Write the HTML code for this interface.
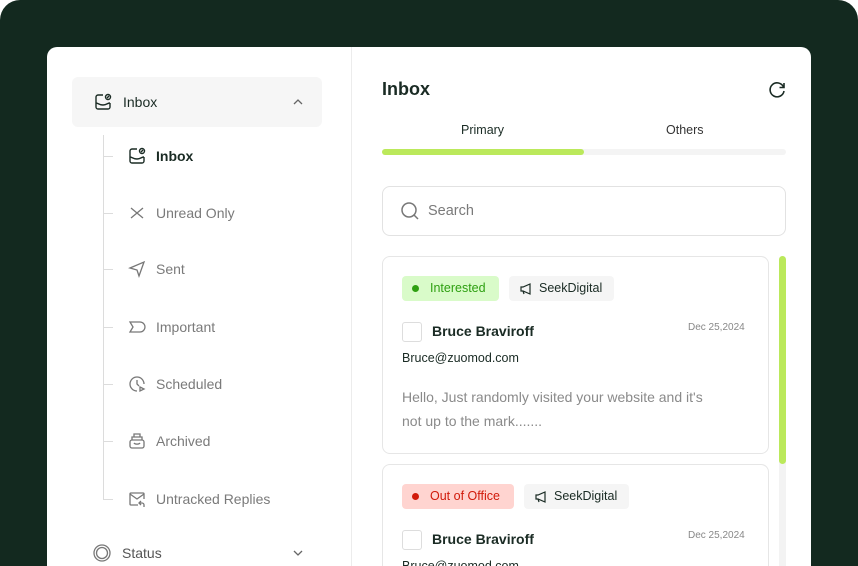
<!DOCTYPE html>
<html style="width:858px;height:566px;overflow:hidden"><head><meta charset="utf-8"><style>
*{box-sizing:border-box;margin:0;padding:0}
body{width:858px;height:566px;overflow:hidden;background:#fff;font-family:"Liberation Sans",sans-serif;position:relative}
.wrap{position:absolute;left:0;top:0;width:858px;height:566px;border-radius:20px 20px 0 0;background:#13291f}
.card{position:absolute;left:47px;top:47px;width:764px;height:519px;background:#fff;border-radius:10px 10px 0 0;overflow:hidden}
.side{position:absolute;left:0;top:0;width:305px;height:100%;border-right:1px solid #ececec}
.top{position:absolute;left:25px;top:30px;width:250px;height:50px;background:#f6f6f6;border-radius:6px}
.ic{position:absolute;width:20px;height:20px}
.t{position:absolute;font-size:14px;color:#7a7a7a;white-space:nowrap}
.vline{position:absolute;left:56px;top:88px;width:1px;height:365px;background:#dcdcdc}
.h{position:absolute;left:56px;width:10px;height:1px;background:#dcdcdc}
.ecard{position:absolute;left:335px;width:387px;border:1px solid #e6e6e6;border-radius:8px;background:#fff}
.tag{position:absolute;height:25px;border-radius:4px;font-size:12.5px;line-height:25px}
</style></head><body>
<div class="wrap"></div>
<div class="card">
 <div class="side">
  <div class="top"></div>
  <svg class="ic" style="left:46px;top:45px" viewBox="0 0 20 20" fill="none" stroke="#1a2b24" stroke-width="1.4"><path d="M10 3H5a2 2 0 0 0-2 2v10a2 2 0 0 0 2 2h10a2 2 0 0 0 2-2v-4"/><path d="M3 11c2 0 3 2 7 2s4-2 7-2"/><circle cx="15" cy="5" r="2.5"/><path d="M14 6l2-2"/></svg>
  <div class="t" style="left:76px;top:47px;color:#1a2b24">Inbox</div>
  <svg style="position:absolute;left:245px;top:51px" width="12" height="8" viewBox="0 0 12 8" fill="none" stroke="#666" stroke-width="1.3"><path d="M2 6l4-4 4 4"/></svg>
  <div class="vline"></div>
  <div class="h" style="top:109px"></div><div class="h" style="top:166px"></div><div class="h" style="top:222px"></div><div class="h" style="top:280px"></div><div class="h" style="top:337px"></div><div class="h" style="top:394px"></div><div class="h" style="top:452px"></div>
  <svg class="ic" style="left:80px;top:99px" viewBox="0 0 20 20" fill="none" stroke="#1a2b24" stroke-width="1.4"><path d="M10 3H5a2 2 0 0 0-2 2v10a2 2 0 0 0 2 2h10a2 2 0 0 0 2-2v-4"/><path d="M3 11c2 0 3 2 7 2s4-2 7-2"/><circle cx="15" cy="5" r="2.5"/><path d="M14 6l2-2"/></svg>
  <div class="t" style="left:109px;top:101px;color:#1a2b24;font-weight:bold">Inbox</div>
  <svg class="ic" style="left:80px;top:156px" viewBox="0 0 20 20" fill="none" stroke="#777" stroke-width="1.3"><path d="M4 5l12 10M16 5L4 15"/></svg>
  <div class="t" style="left:109px;top:158px">Unread Only</div>
  <svg class="ic" style="left:80px;top:212px" viewBox="0 0 20 20" fill="none" stroke="#777" stroke-width="1.3"><path d="M3 9l14-6-5 14-2-6z"/></svg>
  <div class="t" style="left:109px;top:214px">Sent</div>
  <svg class="ic" style="left:80px;top:270px" viewBox="0 0 20 20" fill="none" stroke="#777" stroke-width="1.3"><path d="M3 5h10c3 0 5 2.5 5 5s-2 5-5 5H3l3-5z"/></svg>
  <div class="t" style="left:109px;top:272px">Important</div>
  <svg class="ic" style="left:80px;top:327px" viewBox="0 0 20 20" fill="none" stroke="#777" stroke-width="1.3"><path d="M10 17a7 7 0 1 1 7-7"/><path d="M10 6v4l2 2"/><path d="M13 13l4 2-4 2z"/></svg>
  <div class="t" style="left:109px;top:329px">Scheduled</div>
  <svg class="ic" style="left:80px;top:384px" viewBox="0 0 20 20" fill="none" stroke="#777" stroke-width="1.3"><rect x="3" y="9" width="14" height="8" rx="2"/><path d="M5 9V6h10v3M7 6V3h6v3M7 12c1 1.5 5 1.5 6 0"/></svg>
  <div class="t" style="left:109px;top:386px">Archived</div>
  <svg class="ic" style="left:80px;top:442px" viewBox="0 0 20 20" fill="none" stroke="#777" stroke-width="1.3"><path d="M17 10V5a1 1 0 0 0-1-1H4a1 1 0 0 0-1 1v10a1 1 0 0 0 1 1h7"/><path d="M3 5l7 5 7-5"/><path d="M17 18v-2a2 2 0 0 0-2-2h-2M14 12l-2 2 2 2"/></svg>
  <div class="t" style="left:109px;top:444px">Untracked Replies</div>
  <svg class="ic" style="left:45px;top:496px" viewBox="0 0 20 20" fill="none" stroke="#777" stroke-width="1.3"><circle cx="10" cy="10" r="8"/><circle cx="10" cy="10" r="5.5"/></svg>
  <div class="t" style="left:75px;top:498px;color:#555">Status</div>
  <svg style="position:absolute;left:245px;top:502px" width="12" height="8" viewBox="0 0 12 8" fill="none" stroke="#666" stroke-width="1.3"><path d="M2 2l4 4 4-4"/></svg>
 </div>
 <div class="t" style="left:335px;top:32px;font-size:18px;font-weight:bold;color:#1a2b24">Inbox</div>
 <svg style="position:absolute;left:719px;top:32px" width="22" height="22" viewBox="0 0 22 22" fill="none" stroke="#1a2b24" stroke-width="1.6"><path d="M17.5 8A7 7 0 1 0 18 12"/><path d="M18 4v4.5h-4.5"/></svg>
 <div class="t" style="left:414px;top:76px;font-size:12.5px;color:#1a2b24">Primary</div>
 <div class="t" style="left:619px;top:76px;font-size:12.5px;color:#333">Others</div>
 <div style="position:absolute;left:335px;top:102px;width:404px;height:6px;background:#f4f4f4;border-radius:3px"></div>
 <div style="position:absolute;left:335px;top:102px;width:202px;height:6px;background:#bbe95b;border-radius:3px"></div>
 <div style="position:absolute;left:335px;top:139px;width:404px;height:50px;border:1.5px solid #e2e2e2;border-radius:8px"></div>
 <svg style="position:absolute;left:353px;top:154px" width="20" height="20" viewBox="0 0 20 20" fill="none" stroke="#777" stroke-width="1.5"><circle cx="9" cy="9" r="7"/><path d="M14 14l4 4"/></svg>
 <div class="t" style="left:381px;top:156px;color:#7a7a7a;font-size:14.5px">Search</div>
 <div style="position:absolute;left:732px;top:209px;width:7px;height:310px;background:#f3f3f3;border-radius:4px 4px 0 0"></div>
 <div style="position:absolute;left:732px;top:209px;width:7px;height:208px;background:#bbe95b;border-radius:4px"></div>
 <div class="ecard" style="top:209px;height:198px">
  <div class="tag" style="left:19px;top:19px;width:97px;background:#d9fbc9;color:#2ea011;padding-left:28px"><span style="position:absolute;left:10px;top:9px;width:7px;height:7px;border-radius:50%;background:#2ea011"></span>Interested</div>
  <div class="tag" style="left:126px;top:19px;width:105px;background:#f5f5f5;color:#1a2b24;padding-left:30px"><svg style="position:absolute;left:10px;top:6px" width="14" height="14" viewBox="0 0 14 14" fill="none" stroke="#1a2b24" stroke-width="1.2"><path d="M2 5h2l7-3v10L4 9H2z M4 9l1 3"/></svg>SeekDigital</div>
  <div style="position:absolute;left:19px;top:65px;width:20px;height:20px;border:1.3px solid #ddd;border-radius:3px"></div>
  <div class="t" style="left:49px;top:66px;font-weight:bold;color:#1a2b24">Bruce Braviroff</div>
  <div class="t" style="left:305px;top:65px;font-size:10px;color:#888">Dec 25,2024</div>
  <div class="t" style="left:19px;top:94px;font-size:12.5px;color:#1a2b24">Bruce@zuomod.com</div>
  <div style="position:absolute;left:19px;top:128px;width:312px;font-size:14px;line-height:24px;color:#8a8a8a">Hello, Just randomly visited your website and it's not up to the mark.......</div>
 </div>
 <div class="ecard" style="top:417px;height:102px;border-bottom:none;border-radius:8px 8px 0 0">
  <div class="tag" style="left:19px;top:19px;width:112px;background:#ffd4d0;color:#d11a0a;padding-left:28px"><span style="position:absolute;left:10px;top:9px;width:7px;height:7px;border-radius:50%;background:#d11a0a"></span>Out of Office</div>
  <div class="tag" style="left:141px;top:19px;width:105px;background:#f5f5f5;color:#1a2b24;padding-left:30px"><svg style="position:absolute;left:10px;top:6px" width="14" height="14" viewBox="0 0 14 14" fill="none" stroke="#1a2b24" stroke-width="1.2"><path d="M2 5h2l7-3v10L4 9H2z M4 9l1 3"/></svg>SeekDigital</div>
  <div style="position:absolute;left:19px;top:65px;width:20px;height:20px;border:1.3px solid #ddd;border-radius:3px"></div>
  <div class="t" style="left:49px;top:66px;font-weight:bold;color:#1a2b24">Bruce Braviroff</div>
  <div class="t" style="left:305px;top:65px;font-size:10px;color:#888">Dec 25,2024</div>
  <div class="t" style="left:19px;top:94px;font-size:12.5px;color:#1a2b24">Bruce@zuomod.com</div>
 </div>
</div>
</body></html>
